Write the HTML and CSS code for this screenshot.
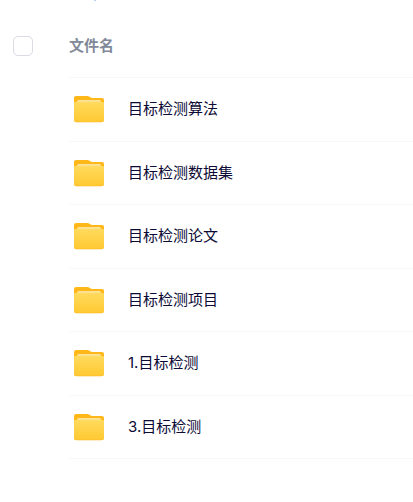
FILE: index.html
```
<!DOCTYPE html>
<html lang="zh-CN">
<head>
    <meta charset="UTF-8">
    <meta name="viewport" content="width=device-width, initial-scale=1.0">
    <title>文件列表</title>
    <link rel="stylesheet" href="styles.css">
</head>
<body>
    <!-- 文件夹图标 -->
    <svg class="sprite" width="0" height="0">
        <defs>
            <linearGradient id="backFill" x1="0" y1="0" x2="0" y2="1">
                <stop offset="0" stop-color="#ffb818"/>
                <stop offset="1" stop-color="#fdb41c"/>
            </linearGradient>
            <linearGradient id="paperFill" x1="0" y1="0" x2="0" y2="1">
                <stop offset="0" stop-color="#ffe39a"/>
                <stop offset="1" stop-color="#ffdb66"/>
            </linearGradient>
            <linearGradient id="frontFill" x1="0" y1="0" x2="0" y2="1">
                <stop offset="0" stop-color="#ffda5c"/>
                <stop offset="1" stop-color="#ffc933"/>
            </linearGradient>
            <symbol id="folder" viewBox="0 0 30 27">
                <path fill="url(#backFill)" d="M2 0h11.500q1 0 1.700.6l1.400 1q.6.400 1.400.400h10q2 0 2 2V24q0 2.300-2.500 2.300h-25Q0 26.300 0 24V2q0-2 2-2z"/>
                <path fill="url(#paperFill)" d="M4.500 4h21q1.500 0 1.500 1.500V9H3V5.500Q3 4 4.500 4z"/>
                <path fill="url(#frontFill)" d="M0 7.200Q0 6 1.300 6h1.500q5 .2 12.200.2T27.200 6h1.500q1.300 0 1.300 1.200v16q0 2.500-2.500 2.500h-25Q0 25.700 0 23.200z"/>
            </symbol>
        </defs>
    </svg>

    <div class="file-box">
        <!-- 表头 -->
        <div class="file-header">
            <span class="checkbox"></span>
            <span class="title">文件名</span>
        </div>
        <!-- 文件列表 -->
        <ul class="file-list">
            <li>
                <svg class="icon"><use href="#folder"/></svg>
                <span class="name">目标检测算法</span>
            </li>
            <li>
                <svg class="icon"><use href="#folder"/></svg>
                <span class="name">目标检测数据集</span>
            </li>
            <li>
                <svg class="icon"><use href="#folder"/></svg>
                <span class="name">目标检测论文</span>
            </li>
            <li>
                <svg class="icon"><use href="#folder"/></svg>
                <span class="name">目标检测项目</span>
            </li>
            <li>
                <svg class="icon"><use href="#folder"/></svg>
                <span class="name">1.目标检测</span>
            </li>
            <li>
                <svg class="icon"><use href="#folder"/></svg>
                <span class="name">3.目标检测</span>
            </li>
        </ul>
    </div>
    <span class="dot"></span>
</body>
</html>
```
FILE: styles.css
```
* {
    margin: 0;
    padding: 0;
    box-sizing: border-box;
}
ul {
    list-style: none;
}
body {
    font-family: Inter, "Noto Sans CJK SC", sans-serif;
    background: #fff;
    overflow: hidden;
}
.sprite {
    position: absolute;
}

.file-box {
    padding-top: 14px;
}
.file-header {
    display: flex;
    align-items: center;
    padding-left: 13px;
    height: 63px;
}
.checkbox {
    width: 20px;
    height: 20px;
    border: 1px solid #d9dbe5;
    border-radius: 5px;
}
.title {
    margin-left: 36px;
    color: #818999;
    font-size: 15px;
    font-weight: bold;
    line-height: 20px;
}
.file-list {
    margin-left: 69px;
    border-top: 1px solid #f8f8f9;
}
.file-list li {
    display: flex;
    align-items: center;
    padding-left: 5px;
    height: 63.5px;
    border-bottom: 1px solid #f8f8f9;
}
.icon {
    margin-top: 1px;
    width: 30px;
    height: 27px;
}
.name {
    margin-left: 24px;
    color: #0b0a35;
    font-size: 15px;
    line-height: 20px;
}
/* 顶部露出的小圆点 */
.dot {
    position: absolute;
    left: 94px;
    top: 0;
    width: 2px;
    height: 1px;
    background: #b9cdf7;
}
```
